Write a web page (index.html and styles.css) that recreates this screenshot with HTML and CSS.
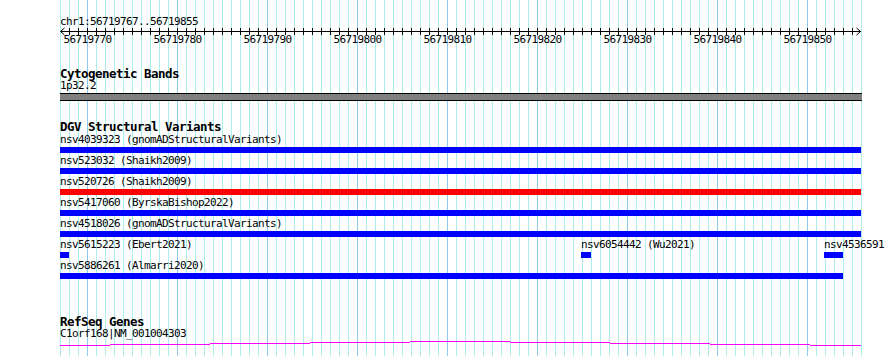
FILE: index.html
```html
<!DOCTYPE html>
<html>
	<head>
		<meta charset="UTF-8">
		<title>chr1:56719767..56719855</title>
		<link rel="stylesheet" href="styles.css">
	</head>
	<body>
		<div id="panel">
			<!--ruler-->
			<div class="locus">chr1:56719767..56719855</div>
			<svg class="ruler" width="802" height="20" viewBox="0 0 802 20">
				<defs>
					<pattern id="tick" width="9" height="20" patternUnits="userSpaceOnUse">
						<rect x="0" y="1" width="1" height="7" fill="#000"/>
					</pattern>
				</defs>
				<rect x="1" y="4" width="800" height="1" fill="#000"/>
				<rect x="9" y="0" width="785" height="20" fill="url(#tick)"/>
				<path d="M4.5 1 L0.5 4.5 L4.5 8" fill="none" stroke="#000"/>
				<path d="M796.5 1 L800.5 4.5 L796.5 8" fill="none" stroke="#000"/>
				<g class="ticklabels">
					<text x="27.5" y="16">56719770</text>
					<text x="117.5" y="16">56719780</text>
					<text x="207.5" y="16">56719790</text>
					<text x="297.5" y="16">56719800</text>
					<text x="387.5" y="16">56719810</text>
					<text x="477.5" y="16">56719820</text>
					<text x="567.5" y="16">56719830</text>
					<text x="657.5" y="16">56719840</text>
					<text x="747.5" y="16">56719850</text>
				</g>
			</svg>

			<!--cytogenetic bands-->
			<div class="track cyto">
				<div class="track-title">Cytogenetic Bands</div>
				<div class="label">1p32.2</div>
				<div class="band"></div>
			</div>

			<!--DGV-->
			<div class="track dgv">
				<div class="track-title">DGV Structural Variants</div>
				<div class="rows">
					<div class="row">
						<span class="feat-label" style="left:0px">nsv4039323 (gnomADStructuralVariants)</span>
						<span class="bar loss" style="left:0px;width:801px"></span>
					</div>
					<div class="row">
						<span class="feat-label" style="left:0px">nsv523032 (Shaikh2009)</span>
						<span class="bar loss" style="left:0px;width:801px"></span>
					</div>
					<div class="row">
						<span class="feat-label" style="left:0px">nsv520726 (Shaikh2009)</span>
						<span class="bar gain" style="left:0px;width:801px"></span>
					</div>
					<div class="row">
						<span class="feat-label" style="left:0px">nsv5417060 (ByrskaBishop2022)</span>
						<span class="bar loss" style="left:0px;width:801px"></span>
					</div>
					<div class="row">
						<span class="feat-label" style="left:0px">nsv4518026 (gnomADStructuralVariants)</span>
						<span class="bar loss" style="left:0px;width:801px"></span>
					</div>
					<div class="row">
						<span class="feat-label" style="left:0px">nsv5615223 (Ebert2021)</span>
						<span class="bar loss" style="left:0px;width:9px"></span>
						<span class="feat-label" style="left:521px">nsv6054442 (Wu2021)</span>
						<span class="bar loss" style="left:521px;width:10px"></span>
						<span class="feat-label" style="left:764px">nsv4536591</span>
						<span class="bar loss" style="left:764px;width:19px"></span>
					</div>
					<div class="row">
						<span class="feat-label" style="left:0px">nsv5886261 (Almarri2020)</span>
						<span class="bar loss" style="left:0px;width:783px"></span>
					</div>
				</div>
			</div>

			<!--refseq-->
			<div class="track genes">
				<div class="track-title">RefSeq Genes</div>
				<div class="label">C1orf168|NM_001004303</div>
				<svg class="intron" width="802" height="8" viewBox="0 0 802 8">
					<path d="M0 6.5H50 M50 5.5H150 M150 4.5H250 M250 3.5H350 M350 2.5H450 M450 3.5H550 M550 4.5H650 M650 5.5H750 M750 6.5H801" fill="none" stroke="#ff00ff" stroke-width="1"/>
				</svg>
			</div>
		</div>
	</body>
</html>
```

FILE: styles.css
```css
body,div,span{
	margin: 0px;
	padding: 0px;
}
body{
	background-color: #fff;
	font-family: "DejaVu Sans Mono", "Liberation Mono", monospace;
	font-size: 11px;
	letter-spacing: -0.62px;
	color: #000;
}
#panel{
	margin-left: 60px;
	width: 802px;
	height: 356px;
	padding-top: 16px;
	box-sizing: border-box;
	background-image:
		repeating-linear-gradient(to right, transparent 0 27px, #8cc8f0 27px 28px, transparent 28px 90px),
		repeating-linear-gradient(to right, #aaeeee 0 1px, transparent 1px 9px);
}
/*ruler*/
#panel .locus{
	height: 11px;
	line-height: 11px;
	white-space: nowrap;
}
#panel .ruler{
	display: block;
	overflow: visible;
}
#panel .ticklabels text{
	font-family: "DejaVu Sans Mono", "Liberation Mono", monospace;
	font-size: 11px;
	letter-spacing: -0.62px;
	text-anchor: middle;
	fill: #000;
}
/*tracks*/
#panel .track-title{
	height: 12px;
	line-height: 12px;
	font-size: 12.5px;
	letter-spacing: -0.52px;
	font-weight: bold;
	white-space: nowrap;
}
#panel .label{
	height: 11px;
	line-height: 11px;
	white-space: nowrap;
}
#panel .cyto{
	margin-top: 21px;
}
#panel .cyto .band{
	margin-top: 2px;
	height: 6px;
	background-color: #808080;
	border-top: 1px solid #000;
	border-bottom: 1px solid #000;
}
#panel .dgv{
	margin-top: 20px;
}
#panel .dgv .rows{
	margin-top: 1px;
}
#panel .dgv .row{
	position: relative;
	height: 21px;
}
#panel .dgv .feat-label{
	position: absolute;
	top: 0px;
	line-height: 11px;
	white-space: nowrap;
}
#panel .dgv .bar{
	position: absolute;
	top: 13px;
	height: 6px;
}
#panel .dgv .loss{
	background-color: #0000ff;
}
#panel .dgv .gain{
	background-color: #ff0000;
}
#panel .genes{
	margin-top: 35px;
}
#panel .genes .intron{
	display: block;
	shape-rendering: crispEdges;
}
```
